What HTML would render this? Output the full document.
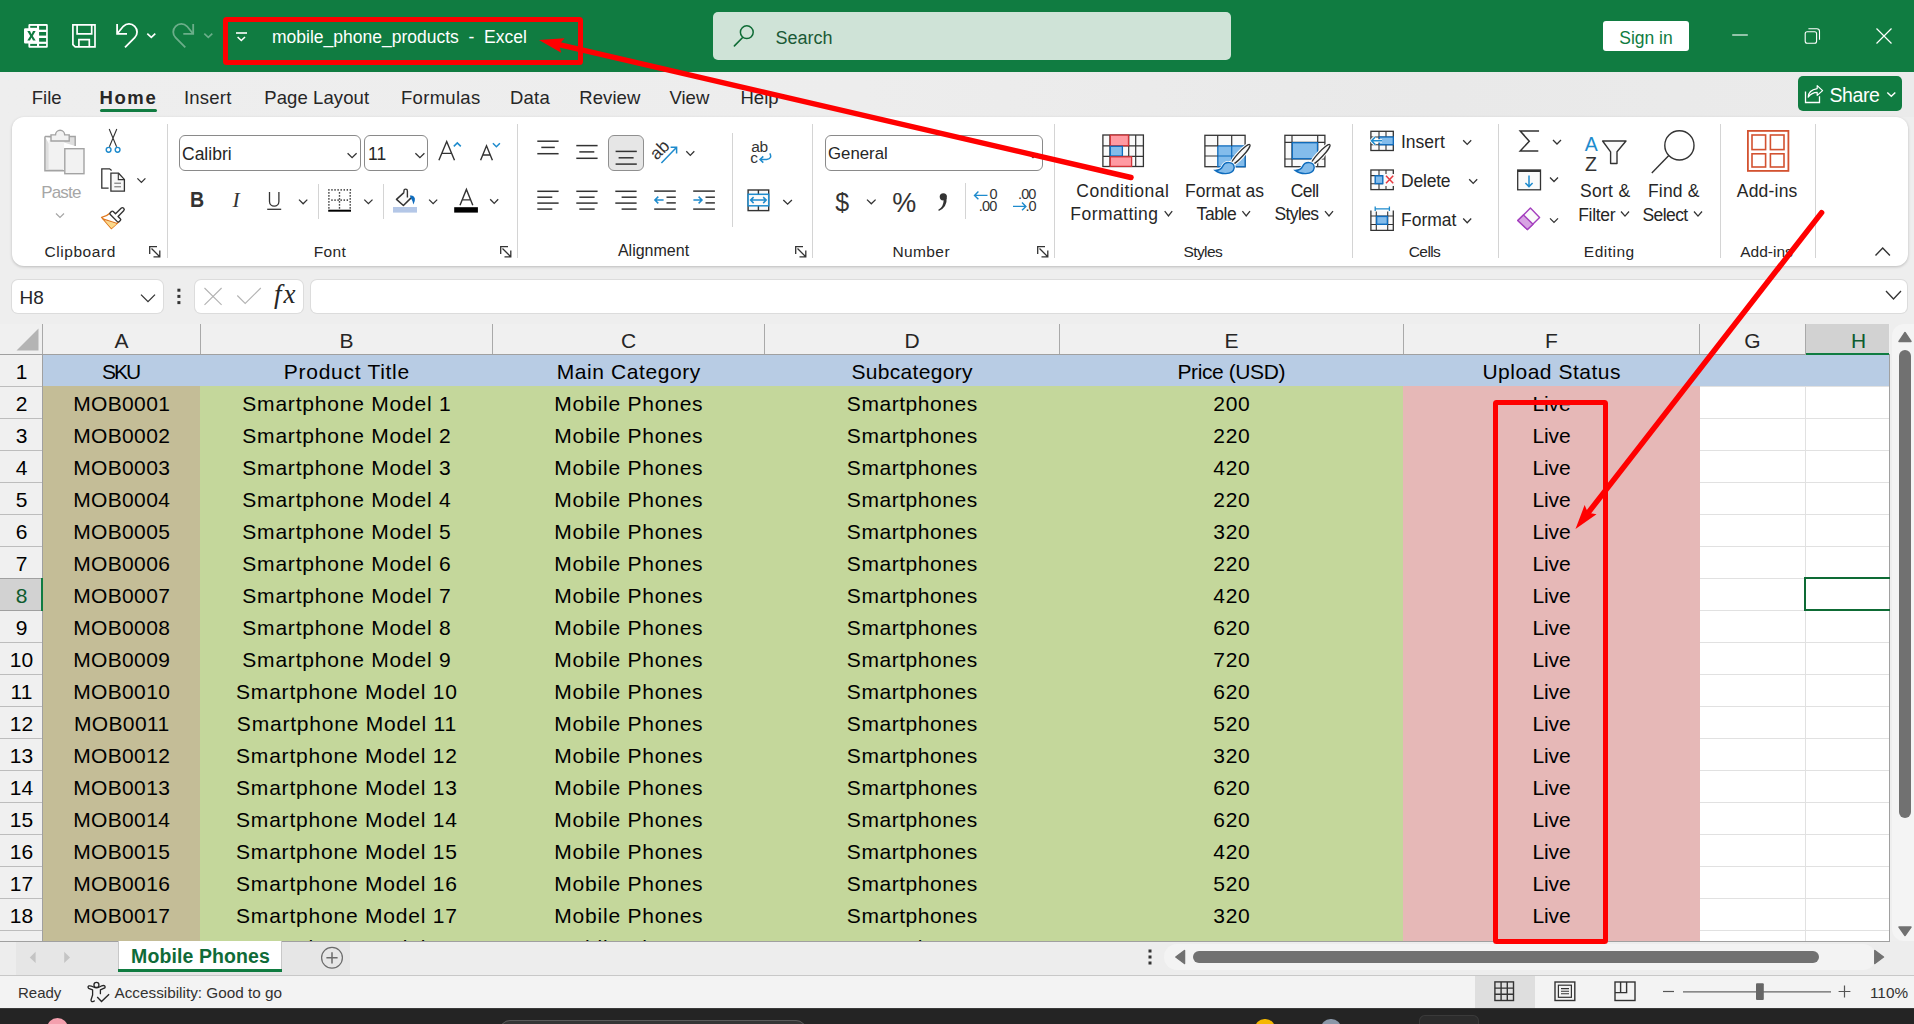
<!DOCTYPE html>
<html><head><meta charset="utf-8"><title>mobile_phone_products - Excel</title>
<style>
html,body{margin:0;padding:0;}
body{width:1914px;height:1024px;overflow:hidden;position:relative;background:#eeeeee;font-family:"Liberation Sans", sans-serif;}
.t{position:absolute;white-space:pre;line-height:normal;}
.r{position:absolute;}
svg.ov{position:absolute;left:0;top:0;}
</style></head><body>
<div class="r" style="left:0px;top:0px;width:1914px;height:72px;background:#107c41;"></div>
<div class="r" style="left:713px;top:12px;width:518px;height:48px;background:#cfe3d7;border-radius:5px;"></div>
<div class="t" style="top:27.71px;font-size:18px;color:#1a5a36;left:775.50px;">Search</div>
<div class="r" style="left:1603px;top:21px;width:86px;height:30px;background:#ffffff;border-radius:3px;"></div>
<div class="t" style="top:27.86px;font-size:17.5px;color:#107c41;left:1146.00px;width:1000px;text-align:center;">Sign in</div>
<div class="t" style="top:27.16px;font-size:17.5px;color:#ffffff;left:272.00px;">mobile_phone_products  -  Excel</div>
<div class="r" style="left:0px;top:72px;width:1914px;height:45px;background:linear-gradient(90deg,#eeeeee 0%,#ededed 45%,#e9e9e9 75%,#ebebeb 100%);"></div>
<div class="t" style="top:86.66px;font-size:18.5px;color:#262626;left:31.80px;">File</div>
<div class="t" style="top:86.66px;font-size:18.5px;color:#262626;font-weight:bold;letter-spacing:1.6px;left:99.50px;">Home</div>
<div class="t" style="top:86.66px;font-size:18.5px;color:#262626;letter-spacing:0.2px;left:184.00px;">Insert</div>
<div class="t" style="top:86.66px;font-size:18.5px;color:#262626;letter-spacing:0.1px;left:264.20px;">Page Layout</div>
<div class="t" style="top:86.66px;font-size:18.5px;color:#262626;letter-spacing:0.3px;left:401.00px;">Formulas</div>
<div class="t" style="top:86.66px;font-size:18.5px;color:#262626;letter-spacing:0.2px;left:510.00px;">Data</div>
<div class="t" style="top:86.66px;font-size:18.5px;color:#262626;letter-spacing:0.1px;left:579.20px;">Review</div>
<div class="t" style="top:86.66px;font-size:18.5px;color:#262626;left:669.50px;">View</div>
<div class="t" style="top:86.66px;font-size:18.5px;color:#262626;left:740.50px;">Help</div>
<div class="r" style="left:100px;top:109px;width:57px;height:3px;background:#107c41;border-radius:2px;"></div>
<div class="r" style="left:1798px;top:76px;width:104px;height:35px;background:#107c41;border-radius:5px;"></div>
<div class="t" style="top:84.15px;font-size:19.5px;color:#ffffff;letter-spacing:-0.4px;left:1829.50px;">Share</div>
<div class="r" style="left:12px;top:117px;width:1896px;height:149px;background:#ffffff;border-radius:12px;box-shadow:0 1px 3px rgba(0,0,0,0.22);"></div>
<div class="r" style="left:12px;top:280px;width:151px;height:33px;background:#ffffff;border-radius:6px;box-shadow:0 0 0 1px #dcdcdc;"></div>
<div class="t" style="top:286.50px;font-size:19px;color:#262626;left:19.50px;">H8</div>
<div class="r" style="left:195px;top:280px;width:108px;height:33px;background:#ffffff;border-radius:6px;box-shadow:0 0 0 1px #dcdcdc;"></div>
<div class="r" style="left:311px;top:280px;width:1596px;height:33px;background:#ffffff;border-radius:6px;box-shadow:0 0 0 1px #dcdcdc;"></div>
<div class="r" style="left:0px;top:324px;width:1890px;height:617px;background:#ffffff;"></div>
<div class="r" style="left:0px;top:324px;width:1890px;height:31px;background:#f0f0f0;"></div>
<div class="r" style="left:0px;top:355px;width:42px;height:586px;background:#f0f0f0;"></div>
<div class="r" style="left:1699px;top:386px;width:190px;height:1px;background:#e1e1e1;"></div>
<div class="r" style="left:1699px;top:418px;width:190px;height:1px;background:#e1e1e1;"></div>
<div class="r" style="left:1699px;top:450px;width:190px;height:1px;background:#e1e1e1;"></div>
<div class="r" style="left:1699px;top:482px;width:190px;height:1px;background:#e1e1e1;"></div>
<div class="r" style="left:1699px;top:514px;width:190px;height:1px;background:#e1e1e1;"></div>
<div class="r" style="left:1699px;top:546px;width:190px;height:1px;background:#e1e1e1;"></div>
<div class="r" style="left:1699px;top:578px;width:190px;height:1px;background:#e1e1e1;"></div>
<div class="r" style="left:1699px;top:610px;width:190px;height:1px;background:#e1e1e1;"></div>
<div class="r" style="left:1699px;top:642px;width:190px;height:1px;background:#e1e1e1;"></div>
<div class="r" style="left:1699px;top:674px;width:190px;height:1px;background:#e1e1e1;"></div>
<div class="r" style="left:1699px;top:706px;width:190px;height:1px;background:#e1e1e1;"></div>
<div class="r" style="left:1699px;top:738px;width:190px;height:1px;background:#e1e1e1;"></div>
<div class="r" style="left:1699px;top:770px;width:190px;height:1px;background:#e1e1e1;"></div>
<div class="r" style="left:1699px;top:802px;width:190px;height:1px;background:#e1e1e1;"></div>
<div class="r" style="left:1699px;top:834px;width:190px;height:1px;background:#e1e1e1;"></div>
<div class="r" style="left:1699px;top:866px;width:190px;height:1px;background:#e1e1e1;"></div>
<div class="r" style="left:1699px;top:898px;width:190px;height:1px;background:#e1e1e1;"></div>
<div class="r" style="left:1699px;top:930px;width:190px;height:1px;background:#e1e1e1;"></div>
<div class="r" style="left:1805px;top:355px;width:1px;height:586px;background:#e1e1e1;"></div>
<div class="r" style="left:43px;top:355px;width:1846px;height:31px;background:#b8cce4;"></div>
<div class="r" style="left:43px;top:386px;width:157px;height:555px;background:#c4bd97;"></div>
<div class="r" style="left:200px;top:386px;width:1203px;height:555px;background:#c4d79b;"></div>
<div class="r" style="left:1403px;top:386px;width:297px;height:555px;background:#e6b8b7;"></div>
<div class="r" style="left:1805px;top:324px;width:84px;height:31px;background:#d2d2d2;"></div>
<div class="r" style="left:1805px;top:353px;width:84px;height:2px;background:#107c41;"></div>
<div class="r" style="left:0px;top:578px;width:42px;height:33px;background:#d2d2d2;"></div>
<div class="r" style="left:42px;top:324px;width:1px;height:31px;background:#a9a9a9;"></div>
<div class="r" style="left:200px;top:324px;width:1px;height:31px;background:#a9a9a9;"></div>
<div class="r" style="left:492px;top:324px;width:1px;height:31px;background:#a9a9a9;"></div>
<div class="r" style="left:764px;top:324px;width:1px;height:31px;background:#a9a9a9;"></div>
<div class="r" style="left:1059px;top:324px;width:1px;height:31px;background:#a9a9a9;"></div>
<div class="r" style="left:1403px;top:324px;width:1px;height:31px;background:#a9a9a9;"></div>
<div class="r" style="left:1699px;top:324px;width:1px;height:31px;background:#a9a9a9;"></div>
<div class="r" style="left:1805px;top:324px;width:1px;height:31px;background:#a9a9a9;"></div>
<div class="r" style="left:0px;top:354px;width:1805px;height:1px;background:#a0a0a0;"></div>
<div class="r" style="left:0px;top:386px;width:42px;height:1px;background:#bdbdbd;"></div>
<div class="r" style="left:0px;top:418px;width:42px;height:1px;background:#bdbdbd;"></div>
<div class="r" style="left:0px;top:450px;width:42px;height:1px;background:#bdbdbd;"></div>
<div class="r" style="left:0px;top:482px;width:42px;height:1px;background:#bdbdbd;"></div>
<div class="r" style="left:0px;top:514px;width:42px;height:1px;background:#bdbdbd;"></div>
<div class="r" style="left:0px;top:546px;width:42px;height:1px;background:#bdbdbd;"></div>
<div class="r" style="left:0px;top:642px;width:42px;height:1px;background:#bdbdbd;"></div>
<div class="r" style="left:0px;top:674px;width:42px;height:1px;background:#bdbdbd;"></div>
<div class="r" style="left:0px;top:706px;width:42px;height:1px;background:#bdbdbd;"></div>
<div class="r" style="left:0px;top:738px;width:42px;height:1px;background:#bdbdbd;"></div>
<div class="r" style="left:0px;top:770px;width:42px;height:1px;background:#bdbdbd;"></div>
<div class="r" style="left:0px;top:802px;width:42px;height:1px;background:#bdbdbd;"></div>
<div class="r" style="left:0px;top:834px;width:42px;height:1px;background:#bdbdbd;"></div>
<div class="r" style="left:0px;top:866px;width:42px;height:1px;background:#bdbdbd;"></div>
<div class="r" style="left:0px;top:898px;width:42px;height:1px;background:#bdbdbd;"></div>
<div class="r" style="left:0px;top:930px;width:42px;height:1px;background:#bdbdbd;"></div>
<div class="r" style="left:0px;top:578px;width:42px;height:1px;background:#a0a0a0;"></div>
<div class="r" style="left:0px;top:610px;width:42px;height:1px;background:#a0a0a0;"></div>
<div class="r" style="left:42px;top:355px;width:1px;height:586px;background:#a0a0a0;"></div>
<div class="r" style="left:41px;top:578px;width:2px;height:33px;background:#107c41;"></div>
<div class="r" style="left:1889px;top:354px;width:1px;height:587px;background:#a0a0a0;"></div>
<div class="t" style="top:329.00px;font-size:21px;color:#262626;left:-378.50px;width:1000px;text-align:center;">A</div>
<div class="t" style="top:329.00px;font-size:21px;color:#262626;left:-153.50px;width:1000px;text-align:center;">B</div>
<div class="t" style="top:329.00px;font-size:21px;color:#262626;left:128.50px;width:1000px;text-align:center;">C</div>
<div class="t" style="top:329.00px;font-size:21px;color:#262626;left:412.00px;width:1000px;text-align:center;">D</div>
<div class="t" style="top:329.00px;font-size:21px;color:#262626;left:731.50px;width:1000px;text-align:center;">E</div>
<div class="t" style="top:329.00px;font-size:21px;color:#262626;left:1051.50px;width:1000px;text-align:center;">F</div>
<div class="t" style="top:329.00px;font-size:21px;color:#262626;left:1252.50px;width:1000px;text-align:center;">G</div>
<div class="t" style="top:329.00px;font-size:21px;color:#0e5c2f;left:1358.50px;width:1000px;text-align:center;">H</div>
<div class="t" style="top:359.50px;font-size:21px;color:#000000;left:-478.50px;width:1000px;text-align:center;">1</div>
<div class="t" style="top:391.50px;font-size:21px;color:#000000;left:-478.50px;width:1000px;text-align:center;">2</div>
<div class="t" style="top:423.50px;font-size:21px;color:#000000;left:-478.50px;width:1000px;text-align:center;">3</div>
<div class="t" style="top:455.50px;font-size:21px;color:#000000;left:-478.50px;width:1000px;text-align:center;">4</div>
<div class="t" style="top:487.50px;font-size:21px;color:#000000;left:-478.50px;width:1000px;text-align:center;">5</div>
<div class="t" style="top:519.50px;font-size:21px;color:#000000;left:-478.50px;width:1000px;text-align:center;">6</div>
<div class="t" style="top:551.50px;font-size:21px;color:#000000;left:-478.50px;width:1000px;text-align:center;">7</div>
<div class="t" style="top:583.50px;font-size:21px;color:#0e5c2f;left:-478.50px;width:1000px;text-align:center;">8</div>
<div class="t" style="top:615.50px;font-size:21px;color:#000000;left:-478.50px;width:1000px;text-align:center;">9</div>
<div class="t" style="top:647.50px;font-size:21px;color:#000000;left:-478.50px;width:1000px;text-align:center;">10</div>
<div class="t" style="top:679.50px;font-size:21px;color:#000000;left:-478.50px;width:1000px;text-align:center;">11</div>
<div class="t" style="top:711.50px;font-size:21px;color:#000000;left:-478.50px;width:1000px;text-align:center;">12</div>
<div class="t" style="top:743.50px;font-size:21px;color:#000000;left:-478.50px;width:1000px;text-align:center;">13</div>
<div class="t" style="top:775.50px;font-size:21px;color:#000000;left:-478.50px;width:1000px;text-align:center;">14</div>
<div class="t" style="top:807.50px;font-size:21px;color:#000000;left:-478.50px;width:1000px;text-align:center;">15</div>
<div class="t" style="top:839.50px;font-size:21px;color:#000000;left:-478.50px;width:1000px;text-align:center;">16</div>
<div class="t" style="top:871.50px;font-size:21px;color:#000000;left:-478.50px;width:1000px;text-align:center;">17</div>
<div class="t" style="top:903.50px;font-size:21px;color:#000000;left:-478.50px;width:1000px;text-align:center;">18</div>
<div class="t" style="top:935.50px;font-size:21px;color:#000000;left:-478.50px;width:1000px;text-align:center;">19</div>
<div class="t" style="top:360.19px;font-size:21px;color:#000000;letter-spacing:-2.0px;left:-379.50px;width:1000px;text-align:center;">SKU</div>
<div class="t" style="top:360.19px;font-size:21px;color:#000000;letter-spacing:0.72px;left:-153.14px;width:1000px;text-align:center;">Product Title</div>
<div class="t" style="top:360.19px;font-size:21px;color:#000000;letter-spacing:0.58px;left:128.79px;width:1000px;text-align:center;">Main Category</div>
<div class="t" style="top:360.19px;font-size:21px;color:#000000;letter-spacing:0.3px;left:412.15px;width:1000px;text-align:center;">Subcategory</div>
<div class="t" style="top:360.19px;font-size:21px;color:#000000;letter-spacing:-0.4px;left:731.30px;width:1000px;text-align:center;">Price (USD)</div>
<div class="t" style="top:360.19px;font-size:21px;color:#000000;letter-spacing:0.52px;left:1051.76px;width:1000px;text-align:center;">Upload Status</div>
<div class="t" style="top:392.19px;font-size:21px;color:#000000;letter-spacing:0.37px;left:-378.31px;width:1000px;text-align:center;">MOB0001</div>
<div class="t" style="top:392.19px;font-size:21px;color:#000000;letter-spacing:0.79px;left:-153.11px;width:1000px;text-align:center;">Smartphone Model 1</div>
<div class="t" style="top:392.19px;font-size:21px;color:#000000;letter-spacing:0.78px;left:128.89px;width:1000px;text-align:center;">Mobile Phones</div>
<div class="t" style="top:392.19px;font-size:21px;color:#000000;letter-spacing:0.54px;left:412.27px;width:1000px;text-align:center;">Smartphones</div>
<div class="t" style="top:392.19px;font-size:21px;color:#000000;letter-spacing:0.65px;left:731.83px;width:1000px;text-align:center;">200</div>
<div class="t" style="top:392.19px;font-size:21px;color:#000000;letter-spacing:-0.1px;left:1051.45px;width:1000px;text-align:center;">Live</div>
<div class="t" style="top:424.19px;font-size:21px;color:#000000;letter-spacing:0.37px;left:-378.31px;width:1000px;text-align:center;">MOB0002</div>
<div class="t" style="top:424.19px;font-size:21px;color:#000000;letter-spacing:0.79px;left:-153.11px;width:1000px;text-align:center;">Smartphone Model 2</div>
<div class="t" style="top:424.19px;font-size:21px;color:#000000;letter-spacing:0.78px;left:128.89px;width:1000px;text-align:center;">Mobile Phones</div>
<div class="t" style="top:424.19px;font-size:21px;color:#000000;letter-spacing:0.54px;left:412.27px;width:1000px;text-align:center;">Smartphones</div>
<div class="t" style="top:424.19px;font-size:21px;color:#000000;letter-spacing:0.65px;left:731.83px;width:1000px;text-align:center;">220</div>
<div class="t" style="top:424.19px;font-size:21px;color:#000000;letter-spacing:-0.1px;left:1051.45px;width:1000px;text-align:center;">Live</div>
<div class="t" style="top:456.19px;font-size:21px;color:#000000;letter-spacing:0.37px;left:-378.31px;width:1000px;text-align:center;">MOB0003</div>
<div class="t" style="top:456.19px;font-size:21px;color:#000000;letter-spacing:0.79px;left:-153.11px;width:1000px;text-align:center;">Smartphone Model 3</div>
<div class="t" style="top:456.19px;font-size:21px;color:#000000;letter-spacing:0.78px;left:128.89px;width:1000px;text-align:center;">Mobile Phones</div>
<div class="t" style="top:456.19px;font-size:21px;color:#000000;letter-spacing:0.54px;left:412.27px;width:1000px;text-align:center;">Smartphones</div>
<div class="t" style="top:456.19px;font-size:21px;color:#000000;letter-spacing:0.65px;left:731.83px;width:1000px;text-align:center;">420</div>
<div class="t" style="top:456.19px;font-size:21px;color:#000000;letter-spacing:-0.1px;left:1051.45px;width:1000px;text-align:center;">Live</div>
<div class="t" style="top:488.19px;font-size:21px;color:#000000;letter-spacing:0.37px;left:-378.31px;width:1000px;text-align:center;">MOB0004</div>
<div class="t" style="top:488.19px;font-size:21px;color:#000000;letter-spacing:0.79px;left:-153.11px;width:1000px;text-align:center;">Smartphone Model 4</div>
<div class="t" style="top:488.19px;font-size:21px;color:#000000;letter-spacing:0.78px;left:128.89px;width:1000px;text-align:center;">Mobile Phones</div>
<div class="t" style="top:488.19px;font-size:21px;color:#000000;letter-spacing:0.54px;left:412.27px;width:1000px;text-align:center;">Smartphones</div>
<div class="t" style="top:488.19px;font-size:21px;color:#000000;letter-spacing:0.65px;left:731.83px;width:1000px;text-align:center;">220</div>
<div class="t" style="top:488.19px;font-size:21px;color:#000000;letter-spacing:-0.1px;left:1051.45px;width:1000px;text-align:center;">Live</div>
<div class="t" style="top:520.20px;font-size:21px;color:#000000;letter-spacing:0.37px;left:-378.31px;width:1000px;text-align:center;">MOB0005</div>
<div class="t" style="top:520.20px;font-size:21px;color:#000000;letter-spacing:0.79px;left:-153.11px;width:1000px;text-align:center;">Smartphone Model 5</div>
<div class="t" style="top:520.20px;font-size:21px;color:#000000;letter-spacing:0.78px;left:128.89px;width:1000px;text-align:center;">Mobile Phones</div>
<div class="t" style="top:520.20px;font-size:21px;color:#000000;letter-spacing:0.54px;left:412.27px;width:1000px;text-align:center;">Smartphones</div>
<div class="t" style="top:520.20px;font-size:21px;color:#000000;letter-spacing:0.65px;left:731.83px;width:1000px;text-align:center;">320</div>
<div class="t" style="top:520.20px;font-size:21px;color:#000000;letter-spacing:-0.1px;left:1051.45px;width:1000px;text-align:center;">Live</div>
<div class="t" style="top:552.20px;font-size:21px;color:#000000;letter-spacing:0.37px;left:-378.31px;width:1000px;text-align:center;">MOB0006</div>
<div class="t" style="top:552.20px;font-size:21px;color:#000000;letter-spacing:0.79px;left:-153.11px;width:1000px;text-align:center;">Smartphone Model 6</div>
<div class="t" style="top:552.20px;font-size:21px;color:#000000;letter-spacing:0.78px;left:128.89px;width:1000px;text-align:center;">Mobile Phones</div>
<div class="t" style="top:552.20px;font-size:21px;color:#000000;letter-spacing:0.54px;left:412.27px;width:1000px;text-align:center;">Smartphones</div>
<div class="t" style="top:552.20px;font-size:21px;color:#000000;letter-spacing:0.65px;left:731.83px;width:1000px;text-align:center;">220</div>
<div class="t" style="top:552.20px;font-size:21px;color:#000000;letter-spacing:-0.1px;left:1051.45px;width:1000px;text-align:center;">Live</div>
<div class="t" style="top:584.20px;font-size:21px;color:#000000;letter-spacing:0.37px;left:-378.31px;width:1000px;text-align:center;">MOB0007</div>
<div class="t" style="top:584.20px;font-size:21px;color:#000000;letter-spacing:0.79px;left:-153.11px;width:1000px;text-align:center;">Smartphone Model 7</div>
<div class="t" style="top:584.20px;font-size:21px;color:#000000;letter-spacing:0.78px;left:128.89px;width:1000px;text-align:center;">Mobile Phones</div>
<div class="t" style="top:584.20px;font-size:21px;color:#000000;letter-spacing:0.54px;left:412.27px;width:1000px;text-align:center;">Smartphones</div>
<div class="t" style="top:584.20px;font-size:21px;color:#000000;letter-spacing:0.65px;left:731.83px;width:1000px;text-align:center;">420</div>
<div class="t" style="top:584.20px;font-size:21px;color:#000000;letter-spacing:-0.1px;left:1051.45px;width:1000px;text-align:center;">Live</div>
<div class="t" style="top:616.20px;font-size:21px;color:#000000;letter-spacing:0.37px;left:-378.31px;width:1000px;text-align:center;">MOB0008</div>
<div class="t" style="top:616.20px;font-size:21px;color:#000000;letter-spacing:0.79px;left:-153.11px;width:1000px;text-align:center;">Smartphone Model 8</div>
<div class="t" style="top:616.20px;font-size:21px;color:#000000;letter-spacing:0.78px;left:128.89px;width:1000px;text-align:center;">Mobile Phones</div>
<div class="t" style="top:616.20px;font-size:21px;color:#000000;letter-spacing:0.54px;left:412.27px;width:1000px;text-align:center;">Smartphones</div>
<div class="t" style="top:616.20px;font-size:21px;color:#000000;letter-spacing:0.65px;left:731.83px;width:1000px;text-align:center;">620</div>
<div class="t" style="top:616.20px;font-size:21px;color:#000000;letter-spacing:-0.1px;left:1051.45px;width:1000px;text-align:center;">Live</div>
<div class="t" style="top:648.20px;font-size:21px;color:#000000;letter-spacing:0.37px;left:-378.31px;width:1000px;text-align:center;">MOB0009</div>
<div class="t" style="top:648.20px;font-size:21px;color:#000000;letter-spacing:0.79px;left:-153.11px;width:1000px;text-align:center;">Smartphone Model 9</div>
<div class="t" style="top:648.20px;font-size:21px;color:#000000;letter-spacing:0.78px;left:128.89px;width:1000px;text-align:center;">Mobile Phones</div>
<div class="t" style="top:648.20px;font-size:21px;color:#000000;letter-spacing:0.54px;left:412.27px;width:1000px;text-align:center;">Smartphones</div>
<div class="t" style="top:648.20px;font-size:21px;color:#000000;letter-spacing:0.65px;left:731.83px;width:1000px;text-align:center;">720</div>
<div class="t" style="top:648.20px;font-size:21px;color:#000000;letter-spacing:-0.1px;left:1051.45px;width:1000px;text-align:center;">Live</div>
<div class="t" style="top:680.20px;font-size:21px;color:#000000;letter-spacing:0.37px;left:-378.31px;width:1000px;text-align:center;">MOB0010</div>
<div class="t" style="top:680.20px;font-size:21px;color:#000000;letter-spacing:0.79px;left:-153.11px;width:1000px;text-align:center;">Smartphone Model 10</div>
<div class="t" style="top:680.20px;font-size:21px;color:#000000;letter-spacing:0.78px;left:128.89px;width:1000px;text-align:center;">Mobile Phones</div>
<div class="t" style="top:680.20px;font-size:21px;color:#000000;letter-spacing:0.54px;left:412.27px;width:1000px;text-align:center;">Smartphones</div>
<div class="t" style="top:680.20px;font-size:21px;color:#000000;letter-spacing:0.65px;left:731.83px;width:1000px;text-align:center;">620</div>
<div class="t" style="top:680.20px;font-size:21px;color:#000000;letter-spacing:-0.1px;left:1051.45px;width:1000px;text-align:center;">Live</div>
<div class="t" style="top:712.20px;font-size:21px;color:#000000;letter-spacing:0.37px;left:-378.31px;width:1000px;text-align:center;">MOB0011</div>
<div class="t" style="top:712.20px;font-size:21px;color:#000000;letter-spacing:0.79px;left:-153.11px;width:1000px;text-align:center;">Smartphone Model 11</div>
<div class="t" style="top:712.20px;font-size:21px;color:#000000;letter-spacing:0.78px;left:128.89px;width:1000px;text-align:center;">Mobile Phones</div>
<div class="t" style="top:712.20px;font-size:21px;color:#000000;letter-spacing:0.54px;left:412.27px;width:1000px;text-align:center;">Smartphones</div>
<div class="t" style="top:712.20px;font-size:21px;color:#000000;letter-spacing:0.65px;left:731.83px;width:1000px;text-align:center;">520</div>
<div class="t" style="top:712.20px;font-size:21px;color:#000000;letter-spacing:-0.1px;left:1051.45px;width:1000px;text-align:center;">Live</div>
<div class="t" style="top:744.20px;font-size:21px;color:#000000;letter-spacing:0.37px;left:-378.31px;width:1000px;text-align:center;">MOB0012</div>
<div class="t" style="top:744.20px;font-size:21px;color:#000000;letter-spacing:0.79px;left:-153.11px;width:1000px;text-align:center;">Smartphone Model 12</div>
<div class="t" style="top:744.20px;font-size:21px;color:#000000;letter-spacing:0.78px;left:128.89px;width:1000px;text-align:center;">Mobile Phones</div>
<div class="t" style="top:744.20px;font-size:21px;color:#000000;letter-spacing:0.54px;left:412.27px;width:1000px;text-align:center;">Smartphones</div>
<div class="t" style="top:744.20px;font-size:21px;color:#000000;letter-spacing:0.65px;left:731.83px;width:1000px;text-align:center;">320</div>
<div class="t" style="top:744.20px;font-size:21px;color:#000000;letter-spacing:-0.1px;left:1051.45px;width:1000px;text-align:center;">Live</div>
<div class="t" style="top:776.20px;font-size:21px;color:#000000;letter-spacing:0.37px;left:-378.31px;width:1000px;text-align:center;">MOB0013</div>
<div class="t" style="top:776.20px;font-size:21px;color:#000000;letter-spacing:0.79px;left:-153.11px;width:1000px;text-align:center;">Smartphone Model 13</div>
<div class="t" style="top:776.20px;font-size:21px;color:#000000;letter-spacing:0.78px;left:128.89px;width:1000px;text-align:center;">Mobile Phones</div>
<div class="t" style="top:776.20px;font-size:21px;color:#000000;letter-spacing:0.54px;left:412.27px;width:1000px;text-align:center;">Smartphones</div>
<div class="t" style="top:776.20px;font-size:21px;color:#000000;letter-spacing:0.65px;left:731.83px;width:1000px;text-align:center;">620</div>
<div class="t" style="top:776.20px;font-size:21px;color:#000000;letter-spacing:-0.1px;left:1051.45px;width:1000px;text-align:center;">Live</div>
<div class="t" style="top:808.20px;font-size:21px;color:#000000;letter-spacing:0.37px;left:-378.31px;width:1000px;text-align:center;">MOB0014</div>
<div class="t" style="top:808.20px;font-size:21px;color:#000000;letter-spacing:0.79px;left:-153.11px;width:1000px;text-align:center;">Smartphone Model 14</div>
<div class="t" style="top:808.20px;font-size:21px;color:#000000;letter-spacing:0.78px;left:128.89px;width:1000px;text-align:center;">Mobile Phones</div>
<div class="t" style="top:808.20px;font-size:21px;color:#000000;letter-spacing:0.54px;left:412.27px;width:1000px;text-align:center;">Smartphones</div>
<div class="t" style="top:808.20px;font-size:21px;color:#000000;letter-spacing:0.65px;left:731.83px;width:1000px;text-align:center;">620</div>
<div class="t" style="top:808.20px;font-size:21px;color:#000000;letter-spacing:-0.1px;left:1051.45px;width:1000px;text-align:center;">Live</div>
<div class="t" style="top:840.20px;font-size:21px;color:#000000;letter-spacing:0.37px;left:-378.31px;width:1000px;text-align:center;">MOB0015</div>
<div class="t" style="top:840.20px;font-size:21px;color:#000000;letter-spacing:0.79px;left:-153.11px;width:1000px;text-align:center;">Smartphone Model 15</div>
<div class="t" style="top:840.20px;font-size:21px;color:#000000;letter-spacing:0.78px;left:128.89px;width:1000px;text-align:center;">Mobile Phones</div>
<div class="t" style="top:840.20px;font-size:21px;color:#000000;letter-spacing:0.54px;left:412.27px;width:1000px;text-align:center;">Smartphones</div>
<div class="t" style="top:840.20px;font-size:21px;color:#000000;letter-spacing:0.65px;left:731.83px;width:1000px;text-align:center;">420</div>
<div class="t" style="top:840.20px;font-size:21px;color:#000000;letter-spacing:-0.1px;left:1051.45px;width:1000px;text-align:center;">Live</div>
<div class="t" style="top:872.20px;font-size:21px;color:#000000;letter-spacing:0.37px;left:-378.31px;width:1000px;text-align:center;">MOB0016</div>
<div class="t" style="top:872.20px;font-size:21px;color:#000000;letter-spacing:0.79px;left:-153.11px;width:1000px;text-align:center;">Smartphone Model 16</div>
<div class="t" style="top:872.20px;font-size:21px;color:#000000;letter-spacing:0.78px;left:128.89px;width:1000px;text-align:center;">Mobile Phones</div>
<div class="t" style="top:872.20px;font-size:21px;color:#000000;letter-spacing:0.54px;left:412.27px;width:1000px;text-align:center;">Smartphones</div>
<div class="t" style="top:872.20px;font-size:21px;color:#000000;letter-spacing:0.65px;left:731.83px;width:1000px;text-align:center;">520</div>
<div class="t" style="top:872.20px;font-size:21px;color:#000000;letter-spacing:-0.1px;left:1051.45px;width:1000px;text-align:center;">Live</div>
<div class="t" style="top:904.20px;font-size:21px;color:#000000;letter-spacing:0.37px;left:-378.31px;width:1000px;text-align:center;">MOB0017</div>
<div class="t" style="top:904.20px;font-size:21px;color:#000000;letter-spacing:0.79px;left:-153.11px;width:1000px;text-align:center;">Smartphone Model 17</div>
<div class="t" style="top:904.20px;font-size:21px;color:#000000;letter-spacing:0.78px;left:128.89px;width:1000px;text-align:center;">Mobile Phones</div>
<div class="t" style="top:904.20px;font-size:21px;color:#000000;letter-spacing:0.54px;left:412.27px;width:1000px;text-align:center;">Smartphones</div>
<div class="t" style="top:904.20px;font-size:21px;color:#000000;letter-spacing:0.65px;left:731.83px;width:1000px;text-align:center;">320</div>
<div class="t" style="top:904.20px;font-size:21px;color:#000000;letter-spacing:-0.1px;left:1051.45px;width:1000px;text-align:center;">Live</div>
<div class="t" style="top:936.20px;font-size:21px;color:#000000;letter-spacing:0.37px;left:-378.31px;width:1000px;text-align:center;">MOB0018</div>
<div class="t" style="top:936.20px;font-size:21px;color:#000000;letter-spacing:0.79px;left:-153.11px;width:1000px;text-align:center;">Smartphone Model 18</div>
<div class="t" style="top:936.20px;font-size:21px;color:#000000;letter-spacing:0.78px;left:128.89px;width:1000px;text-align:center;">Mobile Phones</div>
<div class="t" style="top:936.20px;font-size:21px;color:#000000;letter-spacing:0.54px;left:412.27px;width:1000px;text-align:center;">Smartphones</div>
<div class="t" style="top:936.20px;font-size:21px;color:#000000;letter-spacing:0.65px;left:731.83px;width:1000px;text-align:center;">320</div>
<div class="t" style="top:936.20px;font-size:21px;color:#000000;letter-spacing:-0.1px;left:1051.45px;width:1000px;text-align:center;">Live</div>
<div class="r" style="left:1804px;top:577px;width:86px;height:34px;background:transparent;box-sizing:border-box;border:2px solid #0e6b35;border-right:none;"></div>
<div class="r" style="left:1890px;top:324px;width:24px;height:617px;background:#eeeeee;"></div>
<div class="r" style="left:1892px;top:324px;width:24px;height:617px;background:#f4f4f4;border-radius:12px 0 0 12px;"></div>
<div class="r" style="left:1899px;top:350px;width:12px;height:468px;background:#717171;border-radius:6px;"></div>
<div class="r" style="left:0px;top:941px;width:1914px;height:35px;background:#ededed;"></div>
<div class="r" style="left:0px;top:941px;width:1890px;height:1px;background:#a0a0a0;"></div>
<div class="r" style="left:16px;top:942px;width:334px;height:33px;background:#e6e6e6;"></div>
<div class="r" style="left:118px;top:941px;width:164px;height:31px;background:#ffffff;box-sizing:border-box;border-left:1px solid #c8c8c8;border-right:1px solid #c8c8c8;"></div>
<div class="r" style="left:118px;top:969px;width:164px;height:2.5px;background:#107c41;"></div>
<div class="t" style="top:944.95px;font-size:19.5px;color:#0f6b38;font-weight:bold;letter-spacing:0.1px;left:-299.50px;width:1000px;text-align:center;">Mobile Phones</div>
<div class="r" style="left:1164px;top:944px;width:712px;height:26px;background:#f3f3f3;border-radius:13px;"></div>
<div class="r" style="left:1193px;top:951px;width:626px;height:12px;background:#717171;border-radius:6px;"></div>
<div class="r" style="left:0px;top:975px;width:1914px;height:1px;background:#c8c8c8;"></div>
<div class="r" style="left:0px;top:976px;width:1914px;height:32px;background:#f3f3f3;"></div>
<div class="t" style="top:983.92px;font-size:15px;color:#323130;left:18.00px;">Ready</div>
<div class="t" style="top:983.65px;font-size:15.3px;color:#323130;left:114.50px;">Accessibility: Good to go</div>
<div class="r" style="left:1475px;top:976px;width:60px;height:32px;background:#dedede;"></div>
<div class="t" style="top:983.95px;font-size:15.3px;color:#323130;left:908.00px;width:1000px;text-align:right;">110%</div>
<div class="r" style="left:0px;top:1008px;width:1914px;height:16px;background:#242424;"></div>
<div class="r" style="left:0px;top:1008px;width:1914px;height:1px;background:#3a3a3a;"></div>
<div class="r" style="left:46.5px;top:1017.5px;width:21px;height:21px;background:#f4a0ae;border-radius:50%;"></div>
<div class="r" style="left:500px;top:1020px;width:306px;height:20px;background:#353535;border-radius:10px;box-shadow:inset 0 1px 0 #5a5a5a;"></div>
<div class="r" style="left:1255px;top:1018.7px;width:19.5px;height:19.5px;background:#f5b800;border-radius:50%;"></div>
<div class="r" style="left:1321px;top:1018.7px;width:19.5px;height:19.5px;background:#8a97a8;border-radius:50%;"></div>
<div class="r" style="left:1419px;top:1014.7px;width:59.5px;height:20px;background:#2c2c2c;border-radius:6px;box-shadow:inset 0 0 0 1px #3a3a3a;"></div>
<div class="t" style="top:242.77px;font-size:15.5px;color:#262626;letter-spacing:0.55px;left:-419.80px;width:1000px;text-align:center;">Clipboard</div>
<div class="t" style="top:242.77px;font-size:15.5px;color:#262626;letter-spacing:0.4px;left:-170.00px;width:1000px;text-align:center;">Font</div>
<div class="t" style="top:242.32px;font-size:16px;color:#262626;left:153.50px;width:1000px;text-align:center;">Alignment</div>
<div class="t" style="top:242.77px;font-size:15.5px;color:#262626;letter-spacing:0.4px;left:421.20px;width:1000px;text-align:center;">Number</div>
<div class="t" style="top:242.77px;font-size:15.5px;color:#262626;letter-spacing:-0.6px;left:702.80px;width:1000px;text-align:center;">Styles</div>
<div class="t" style="top:242.77px;font-size:15.5px;color:#262626;letter-spacing:-0.6px;left:924.50px;width:1000px;text-align:center;">Cells</div>
<div class="t" style="top:242.77px;font-size:15.5px;color:#262626;letter-spacing:0.5px;left:1109.30px;width:1000px;text-align:center;">Editing</div>
<div class="t" style="top:242.77px;font-size:15.5px;color:#262626;left:1266.50px;width:1000px;text-align:center;">Add-ins</div>
<div class="r" style="left:166.5px;top:124px;width:1px;height:134px;background:#d4d4d4;"></div>
<div class="r" style="left:517px;top:124px;width:1px;height:134px;background:#d4d4d4;"></div>
<div class="r" style="left:812px;top:124px;width:1px;height:134px;background:#d4d4d4;"></div>
<div class="r" style="left:1054px;top:124px;width:1px;height:134px;background:#d4d4d4;"></div>
<div class="r" style="left:1351.5px;top:124px;width:1px;height:134px;background:#d4d4d4;"></div>
<div class="r" style="left:1498px;top:124px;width:1px;height:134px;background:#d4d4d4;"></div>
<div class="r" style="left:1720px;top:124px;width:1px;height:134px;background:#d4d4d4;"></div>
<div class="r" style="left:1814.5px;top:124px;width:1px;height:134px;background:#d4d4d4;"></div>
<div class="t" style="top:183.31px;font-size:17px;color:#a6a6a6;letter-spacing:-0.8px;left:-439.10px;width:1000px;text-align:center;">Paste</div>
<div class="r" style="left:179px;top:135px;width:182px;height:36px;background:#fff;box-sizing:border-box;border:1px solid #8a8a8a;border-radius:6px;"></div>
<div class="r" style="left:364px;top:135px;width:64px;height:36px;background:#fff;box-sizing:border-box;border:1px solid #8a8a8a;border-radius:6px;"></div>
<div class="t" style="top:144.16px;font-size:17.5px;color:#262626;left:182.00px;">Calibri</div>
<div class="t" style="top:144.16px;font-size:17.5px;color:#262626;left:368.00px;">11</div>
<div class="t" style="top:186.84px;font-size:22.5px;color:#333333;font-weight:bold;left:-302.60px;width:1000px;text-align:center;transform:scaleX(0.87);">B</div>
<div class="t" style="top:187.74px;font-size:21.5px;color:#333333;left:-264.00px;width:1000px;text-align:center;font-family:'Liberation Serif',serif;font-style:italic;">I</div>
<div class="r" style="left:318px;top:183.5px;width:1px;height:35.5px;background:#d4d4d4;"></div>
<div class="r" style="left:383px;top:183.5px;width:1px;height:35.5px;background:#d4d4d4;"></div>
<div class="r" style="left:608px;top:135px;width:36px;height:36px;background:#e6e6e6;box-sizing:border-box;border:1px solid #8f8f8f;border-radius:6px;"></div>
<div class="r" style="left:731.5px;top:133px;width:1px;height:94px;background:#d4d4d4;"></div>
<div class="t" style="top:138.37px;font-size:15.5px;color:#333333;letter-spacing:-0.3px;left:259.50px;width:1000px;text-align:center;">ab</div>
<div class="t" style="top:149.17px;font-size:15.5px;color:#333333;left:254.00px;width:1000px;text-align:center;">c</div>
<div class="r" style="left:825px;top:135px;width:218px;height:36px;background:#fff;box-sizing:border-box;border:1px solid #8a8a8a;border-radius:6px;"></div>
<div class="t" style="top:144.30px;font-size:16.8px;color:#262626;left:828.00px;">General</div>
<div class="t" style="top:188.38px;font-size:25px;color:#333333;left:342.30px;width:1000px;text-align:center;">$</div>
<div class="t" style="top:187.87px;font-size:27px;color:#333333;letter-spacing:-0.5px;left:404.00px;width:1000px;text-align:center;">%</div>
<div class="r" style="left:964.5px;top:183px;width:1px;height:36px;background:#d4d4d4;"></div>
<div class="t" style="top:186.08px;font-size:14.5px;color:#333333;left:493.60px;width:1000px;text-align:center;">0</div>
<div class="t" style="top:198.48px;font-size:14.5px;color:#333333;letter-spacing:-0.9px;left:487.60px;width:1000px;text-align:center;">.00</div>
<div class="t" style="top:186.08px;font-size:14.5px;color:#333333;letter-spacing:-0.9px;left:526.80px;width:1000px;text-align:center;">.00</div>
<div class="t" style="top:198.48px;font-size:14.5px;color:#333333;letter-spacing:-0.9px;left:530.60px;width:1000px;text-align:center;">.0</div>
<div class="t" style="top:180.96px;font-size:17.5px;color:#262626;letter-spacing:0.5px;left:622.80px;width:1000px;text-align:center;">Conditional</div>
<div class="t" style="top:204.46px;font-size:17.5px;color:#262626;letter-spacing:0.45px;left:614.40px;width:1000px;text-align:center;">Formatting</div>
<div class="t" style="top:180.96px;font-size:17.5px;color:#262626;left:724.50px;width:1000px;text-align:center;">Format as</div>
<div class="t" style="top:204.46px;font-size:17.5px;color:#262626;letter-spacing:-0.4px;left:716.50px;width:1000px;text-align:center;">Table</div>
<div class="t" style="top:180.96px;font-size:17.5px;color:#262626;letter-spacing:-0.6px;left:804.60px;width:1000px;text-align:center;">Cell</div>
<div class="t" style="top:204.46px;font-size:17.5px;color:#262626;letter-spacing:-0.6px;left:796.50px;width:1000px;text-align:center;">Styles</div>
<div class="t" style="top:131.96px;font-size:17.5px;color:#262626;left:1401.00px;">Insert</div>
<div class="t" style="top:170.86px;font-size:17.5px;color:#262626;letter-spacing:-0.2px;left:1401.00px;">Delete</div>
<div class="t" style="top:209.66px;font-size:17.5px;color:#262626;left:1401.00px;">Format</div>
<div class="t" style="top:132.55px;font-size:19.5px;color:#1e8bcd;left:1091.30px;width:1000px;text-align:center;">A</div>
<div class="t" style="top:152.65px;font-size:19.5px;color:#333333;left:1091.00px;width:1000px;text-align:center;">Z</div>
<div class="t" style="top:180.56px;font-size:17.5px;color:#262626;letter-spacing:0.3px;left:1105.20px;width:1000px;text-align:center;">Sort &amp;</div>
<div class="t" style="top:204.96px;font-size:17.5px;color:#262626;letter-spacing:-0.3px;left:1578.20px;">Filter</div>
<div class="t" style="top:180.56px;font-size:17.5px;color:#262626;letter-spacing:0.2px;left:1173.80px;width:1000px;text-align:center;">Find &amp;</div>
<div class="t" style="top:204.96px;font-size:17.5px;color:#262626;letter-spacing:-0.6px;left:1642.50px;">Select</div>
<div class="t" style="top:180.56px;font-size:17.5px;color:#262626;letter-spacing:0.2px;left:1267.20px;width:1000px;text-align:center;">Add-ins</div>
<div class="t" style="top:279.17px;font-size:27px;color:#262626;letter-spacing:2.0px;left:-214.20px;width:1000px;text-align:center;font-family:'Liberation Serif',serif;font-style:italic;">fx</div>
<svg class="ov" width="1914" height="1024" viewBox="0 0 1914 1024">
<path d="M16.5 350.5 L38.5 328.5 L38.5 350.5 Z" fill="#b4b4b4"/>
<path d="M28.6 24 H46.6 Q47.8 24 47.8 25.2 V46.6 Q47.8 47.8 46.6 47.8 H29.6 Q28.4 47.8 28.4 46.6 V43.4 H25.2 Q24 43.4 24 42.2 V29.6 Q24 28.3 25.2 28.3 H28.4 V25.2 Q28.4 24 29.6 24 Z" fill="#fff"/>
<rect x="39.1" y="25.9" width="7" height="3.8" fill="#107c41"/>
<rect x="39.1" y="32" width="7" height="3.6" fill="#107c41"/>
<rect x="39.1" y="38" width="7" height="3.7" fill="#107c41"/>
<rect x="39.1" y="43.9" width="7" height="2" fill="#107c41"/>
<rect x="30.2" y="25.9" width="6.8" height="1.9" fill="#107c41"/>
<rect x="30.2" y="43.9" width="6.8" height="2" fill="#107c41"/>
<path d="M27.3 31.1 H30 L31.5 34.2 L33 31.1 H35.6 L32.8 35.9 L35.7 40.6 H33 L31.5 37.5 L30 40.6 H27.3 L30.2 35.9 Z" fill="#107c41"/>
<path d="M72.9 24.9 H95 V46.9 H75.2 L72.9 44.6 Z" fill="none" stroke="#fff" stroke-width="1.7"/>
<path d="M77.1 24.9 V33.9 H91.7 V24.9" fill="none" stroke="#fff" stroke-width="1.7"/>
<path d="M78.9 46.9 V39.6 H89.3 V46.9" fill="none" stroke="#fff" stroke-width="1.7"/>
<g opacity="1.0" fill="none" stroke="#fff" stroke-width="1.8"><path d="M117.1 24 V33.8 H127"/><path d="M117.6 33.2 L123.3 26.3 A8 8 0 0 1 134.7 37.7 L125 47.4"/></g>
<path d="M147.3 33.6 L151.3 37.4 L155.3 33.6" fill="none" stroke="#fff" stroke-width="1.6"/>
<g transform="translate(310.3,0) scale(-1,1)" opacity="0.38" fill="none" stroke="#fff" stroke-width="1.8"><path d="M117.1 24 V33.8 H127"/><path d="M117.6 33.2 L123.3 26.3 A8 8 0 0 1 134.7 37.7 L125 47.4"/></g>
<path d="M204.3 33.6 L208.3 37.4 L212.3 33.6" fill="none" stroke="#fff" stroke-width="1.6" opacity="0.38"/>
<path d="M236 33 H247" stroke="#fff" stroke-width="1.6"/><path d="M237.6 37 L241.3 40.5 L245 37" fill="none" stroke="#fff" stroke-width="1.6"/>
<circle cx="746.8" cy="32.2" r="6.4" fill="none" stroke="#0e6b35" stroke-width="1.5"/><path d="M742.4 37.8 L734.4 45.9" stroke="#0e6b35" stroke-width="1.6" stroke-linecap="round"/>
<path d="M1732.2 35 H1747.8" stroke="#fff" stroke-width="1.1"/>
<rect x="1805.2" y="31.8" width="11.4" height="11.4" rx="2" fill="none" stroke="#fff" stroke-width="1.1"/><path d="M1808.4 28.8 H1816.8 Q1819.5 28.8 1819.5 31.5 V39.8" fill="none" stroke="#fff" stroke-width="1.1"/>
<path d="M1876.5 28.5 L1891.5 43.5 M1891.5 28.5 L1876.5 43.5" stroke="#fff" stroke-width="1.2"/>
<path d="M1805.5 91.5 V102.5 H1819.5 V96.2" fill="none" stroke="#fff" stroke-width="1.3"/><path d="M1808.2 97.2 Q1808.4 90 1817.2 88.6 V85.6 L1822.6 90.6 L1817.2 95.4 V92.4 Q1811.8 92.4 1808.2 97.2 Z" fill="none" stroke="#fff" stroke-width="1.2" stroke-linejoin="round"/>
<path d="M1887.3 92.5 L1891.3 96.3 L1895.3 92.5" fill="none" stroke="#fff" stroke-width="1.4"/>
<path d="M149.7 254 V246.7 H157" fill="none" stroke="#333333" stroke-width="1.3"/><path d="M151.5 248.5 L159.5 256.5 M153.5 256.8 H159.8 V250.5" fill="none" stroke="#333333" stroke-width="1.3"/>
<path d="M500.7 254 V246.7 H508" fill="none" stroke="#333333" stroke-width="1.3"/><path d="M502.5 248.5 L510.5 256.5 M504.5 256.8 H510.8 V250.5" fill="none" stroke="#333333" stroke-width="1.3"/>
<path d="M795.7 254 V246.7 H803" fill="none" stroke="#333333" stroke-width="1.3"/><path d="M797.5 248.5 L805.5 256.5 M799.5 256.8 H805.8 V250.5" fill="none" stroke="#333333" stroke-width="1.3"/>
<path d="M1037.7 254 V246.7 H1045" fill="none" stroke="#333333" stroke-width="1.3"/><path d="M1039.5 248.5 L1047.5 256.5 M1041.5 256.8 H1047.8 V250.5" fill="none" stroke="#333333" stroke-width="1.3"/>
<path d="M1875.5 255.5 L1882.7 248 L1889.9 255.5" fill="none" stroke="#333333" stroke-width="1.4"/>
<path d="M44.9 136.5 H75.2 V146 M64 170.7 H44.9 V136.5" fill="#dedede" stroke="#a3a3a3" stroke-width="1.4"/>
<rect x="48.6" y="140" width="15.5" height="29" fill="#f2f2f2"/>
<path d="M51 134.9 H55.5 A4.6 4.6 0 0 1 64.7 134.9 H69.2 V141 H51 Z" fill="#f2f2f2" stroke="#a3a3a3" stroke-width="1.4"/>
<rect x="64.8" y="148.7" width="19.2" height="25" fill="#f2f2f2" stroke="#a3a3a3" stroke-width="1.4"/>
<path d="M56 213.5 L60.0 217.5 L64 213.5" fill="none" stroke="#a6a6a6" stroke-width="1.2" opacity="1"/>
<path d="M109.2 129 L116.6 146.8 M116.8 129 L109.4 146.8" stroke="#333333" stroke-width="1.1"/>
<circle cx="108.6" cy="149.8" r="2.4" fill="none" stroke="#1e8bcd" stroke-width="1.4"/><circle cx="117.6" cy="149.8" r="2.4" fill="none" stroke="#1e8bcd" stroke-width="1.4"/>
<path d="M108.6 188.2 H101.8 V168.8 H109.6 L111.6 170.6" fill="none" stroke="#333333" stroke-width="1.3"/>
<path d="M110.9 173.2 H118.6 L124.4 179.4 V191.2 H110.9 Z" fill="#f8f8f8" stroke="#333333" stroke-width="1.3"/><path d="M118.3 173.4 V179.6 H124.2" fill="none" stroke="#333333" stroke-width="1.1"/>
<path d="M114.3 183.2 H121 M114.3 186.8 H121" stroke="#666" stroke-width="1"/>
<path d="M137.4 178.4 L141.4 182.4 L145.4 178.4" fill="none" stroke="#333333" stroke-width="1.3" opacity="1"/>
<path d="M110.9 212.6 Q106.5 216.6 101.6 217.4 L111.4 228.6 L119.2 221.5 Z" fill="#fff" stroke="#e07a1f" stroke-width="1.4" stroke-linejoin="round"/>
<path d="M104.6 220.2 L116.6 223.9 L111.5 228.2 Z" fill="#fbd98a"/><path d="M102.8 218.9 L117.3 223.5" stroke="#e07a1f" stroke-width="1.3"/>
<path d="M-2.1 -5 Q-2.1 -6.3 -0.8 -6.3 H0.8 Q2.1 -6.3 2.1 -5 V-1.8 H10 A1.8 1.8 0 0 1 10 1.8 H2.1 V5 Q2.1 6.3 0.8 6.3 H-0.8 Q-2.1 6.3 -2.1 5 Z" transform="translate(115.3 216.6) rotate(-45)" fill="#fff" stroke="#333333" stroke-width="1.4" stroke-linejoin="round"/>
<path d="M347.6 153.2 L352.1 157.6 L356.6 153.2" fill="none" stroke="#333333" stroke-width="1.3" opacity="1"/>
<path d="M415.4 153.2 L419.9 157.6 L424.4 153.2" fill="none" stroke="#333333" stroke-width="1.3" opacity="1"/>
<path d="M438.9 160.3 L446.7 141.5 L454.5 160.3 M441.7 153.4 H451.7" fill="none" stroke="#333333" stroke-width="1.4"/>
<path d="M453.8 146.4 L457.3 142.9 L460.8 146.4" fill="none" stroke="#1e8bcd" stroke-width="1.5"/>
<path d="M480.6 160.3 L486.5 145.8 L492.4 160.3 M482.7 155 H490.3" fill="none" stroke="#333333" stroke-width="1.4"/>
<path d="M492.9 143.3 L496.4 146.8 L499.9 143.3" fill="none" stroke="#1e8bcd" stroke-width="1.5"/>
<path d="M269.5 192 V201.5 A4.7 4.7 0 0 0 278.9 201.5 V192" fill="none" stroke="#333333" stroke-width="1.3"/><path d="M267.2 209.3 H281.2" stroke="#333333" stroke-width="1.3"/>
<path d="M299 199.6 L303.15 203.79999999999998 L307.3 199.6" fill="none" stroke="#333333" stroke-width="1.3" opacity="1"/>
<rect x="328.20" y="189.20" width="1.4" height="1.4" fill="#222"/><rect x="331.27" y="189.20" width="1.4" height="1.4" fill="#222"/><rect x="334.34" y="189.20" width="1.4" height="1.4" fill="#222"/><rect x="337.41" y="189.20" width="1.4" height="1.4" fill="#222"/><rect x="340.48" y="189.20" width="1.4" height="1.4" fill="#222"/><rect x="343.55" y="189.20" width="1.4" height="1.4" fill="#222"/><rect x="346.62" y="189.20" width="1.4" height="1.4" fill="#222"/><rect x="349.69" y="189.20" width="1.4" height="1.4" fill="#222"/><rect x="328.20" y="192.20" width="1.4" height="1.4" fill="#222"/><rect x="349.50" y="192.20" width="1.4" height="1.4" fill="#222"/><rect x="338.80" y="192.20" width="1.4" height="1.4" fill="#222"/><rect x="328.20" y="195.20" width="1.4" height="1.4" fill="#222"/><rect x="349.50" y="195.20" width="1.4" height="1.4" fill="#222"/><rect x="338.80" y="195.20" width="1.4" height="1.4" fill="#222"/><rect x="328.20" y="198.20" width="1.4" height="1.4" fill="#222"/><rect x="349.50" y="198.20" width="1.4" height="1.4" fill="#222"/><rect x="338.80" y="198.20" width="1.4" height="1.4" fill="#222"/><rect x="328.20" y="201.20" width="1.4" height="1.4" fill="#222"/><rect x="349.50" y="201.20" width="1.4" height="1.4" fill="#222"/><rect x="338.80" y="201.20" width="1.4" height="1.4" fill="#222"/><rect x="328.20" y="204.20" width="1.4" height="1.4" fill="#222"/><rect x="349.50" y="204.20" width="1.4" height="1.4" fill="#222"/><rect x="338.80" y="204.20" width="1.4" height="1.4" fill="#222"/><rect x="328.20" y="207.20" width="1.4" height="1.4" fill="#222"/><rect x="349.50" y="207.20" width="1.4" height="1.4" fill="#222"/><rect x="338.80" y="207.20" width="1.4" height="1.4" fill="#222"/><rect x="331.27" y="199.40" width="1.4" height="1.4" fill="#222"/><rect x="334.34" y="199.40" width="1.4" height="1.4" fill="#222"/><rect x="337.41" y="199.40" width="1.4" height="1.4" fill="#222"/><rect x="340.48" y="199.40" width="1.4" height="1.4" fill="#222"/><rect x="343.55" y="199.40" width="1.4" height="1.4" fill="#222"/><rect x="346.62" y="199.40" width="1.4" height="1.4" fill="#222"/>
<path d="M328.2 210.7 H351" stroke="#000" stroke-width="2"/>
<path d="M364.3 199.6 L368.40000000000003 203.6 L372.5 199.6" fill="none" stroke="#333333" stroke-width="1.3" opacity="1"/>
<path d="M403.9 192.6 L396.5 199.4 L403.4 205.5 L411.1 197.9" fill="#fafafa" stroke="#333333" stroke-width="1.5" stroke-linejoin="round"/>
<path d="M403.9 192.8 V190.9 A1.75 1.75 0 0 1 407.4 190.9 V197.6" fill="none" stroke="#333333" stroke-width="1.4"/>
<path d="M409.8 195.6 Q413.6 194.6 414.9 198.6 Q415.3 201.6 413.4 204.4 Q412.8 200.6 411 198.4 Z" fill="#0f6cbd"/>
<rect x="393" y="207" width="24" height="5.6" fill="#b4c7e7"/>
<path d="M429.1 199.6 L433.15000000000003 203.6 L437.20000000000005 199.6" fill="none" stroke="#333333" stroke-width="1.3" opacity="1"/>
<path d="M460 205.2 L466.4 189.4 L472.8 205.2 M462.2 199.9 H470.6" fill="none" stroke="#333333" stroke-width="1.4"/>
<rect x="454.2" y="207.2" width="23.7" height="5.4" fill="#000"/>
<path d="M490.2 199.2 L494.2 203.39999999999998 L498.2 199.2" fill="none" stroke="#333333" stroke-width="1.3" opacity="1"/>
<path d="M537.3 141.2 H558.5999999999999" stroke="#333333" stroke-width="1.5"/><path d="M541.3 147.4 H554.8" stroke="#333333" stroke-width="1.5"/><path d="M537.3 153.7 H558.5999999999999" stroke="#333333" stroke-width="1.5"/>
<path d="M576.3 145.6 H597.5999999999999" stroke="#333333" stroke-width="1.5"/><path d="M579.3 151.9 H594.3" stroke="#333333" stroke-width="1.5"/><path d="M576.3 158.3 H597.5999999999999" stroke="#333333" stroke-width="1.5"/>
<path d="M615.6 151.4 H636.8000000000001" stroke="#333333" stroke-width="1.5"/><path d="M618.6 157.8 H633.6" stroke="#333333" stroke-width="1.5"/><path d="M615.6 164.1 H636.8000000000001" stroke="#333333" stroke-width="1.5"/>
<text x="0" y="0" transform="translate(656.8,160.8) rotate(-45)" font-family="Liberation Sans" font-size="17.5" fill="#333333">ab</text>
<path d="M661.4 163 L676.4 147.4 M670.6 147.3 H676.6 V153.4" fill="none" stroke="#1e8bcd" stroke-width="1.5"/>
<path d="M686.3 151.2 L690.3 155.39999999999998 L694.3 151.2" fill="none" stroke="#333333" stroke-width="1.3" opacity="1"/>
<path d="M769.8 153.4 Q772.6 158.6 766.6 159.5 H760.2 M763.3 156.4 L760 159.5 L763.3 162.6" fill="none" stroke="#1e8bcd" stroke-width="1.5"/>
<path d="M537.3 191.3 H558.5999999999999" stroke="#333333" stroke-width="1.5"/><path d="M537.3 197.2 H552.3" stroke="#333333" stroke-width="1.5"/><path d="M537.3 203.1 H558.5999999999999" stroke="#333333" stroke-width="1.5"/><path d="M537.3 209.1 H552.3" stroke="#333333" stroke-width="1.5"/>
<path d="M576.3 191.3 H597.5999999999999" stroke="#333333" stroke-width="1.5"/><path d="M579.3 197.2 H594.5999999999999" stroke="#333333" stroke-width="1.5"/><path d="M576.3 203.1 H597.5999999999999" stroke="#333333" stroke-width="1.5"/><path d="M579.3 209.1 H594.5999999999999" stroke="#333333" stroke-width="1.5"/>
<path d="M615.3 191.3 H636.5999999999999" stroke="#333333" stroke-width="1.5"/><path d="M621.5999999999999 197.2 H636.5999999999999" stroke="#333333" stroke-width="1.5"/><path d="M615.3 203.1 H636.5999999999999" stroke="#333333" stroke-width="1.5"/><path d="M621.5999999999999 209.1 H636.5999999999999" stroke="#333333" stroke-width="1.5"/>
<path d="M654.2 191.1 H675.8000000000001" stroke="#333333" stroke-width="1.5"/><path d="M666.5 197.2 H675.8000000000001" stroke="#333333" stroke-width="1.5"/><path d="M666.5 202.9 H675.8000000000001" stroke="#333333" stroke-width="1.5"/><path d="M654.2 209.1 H675.8000000000001" stroke="#333333" stroke-width="1.5"/>
<path d="M693.2 191.1 H714.9000000000001" stroke="#333333" stroke-width="1.5"/><path d="M705.5 197.2 H714.9000000000001" stroke="#333333" stroke-width="1.5"/><path d="M705.5 202.9 H714.9000000000001" stroke="#333333" stroke-width="1.5"/><path d="M693.2 209.1 H714.9000000000001" stroke="#333333" stroke-width="1.5"/>
<path d="M655 200 H663.6 M658.3 196.6 L654.9 200 L658.3 203.4" fill="none" stroke="#1e8bcd" stroke-width="1.5"/>
<path d="M693.4 200 H701.9 M698.6 196.6 L702 200 L698.6 203.4" fill="none" stroke="#1e8bcd" stroke-width="1.5"/>
<rect x="748.1" y="190" width="20.6" height="20.6" fill="#fafafa" stroke="#333333" stroke-width="1.4"/><path d="M758.4 190 V210.6" stroke="#333333" stroke-width="1.4"/>
<rect x="748.1" y="194.3" width="20.6" height="11.5" fill="#fafafa" stroke="#1e8bcd" stroke-width="1.5"/>
<path d="M750.6 200.1 H766.2 M753.6 197.1 L750.6 200.1 L753.6 203.1 M763.2 197.1 L766.2 200.1 L763.2 203.1" fill="none" stroke="#1e8bcd" stroke-width="1.5"/>
<path d="M783.3 200 L787.5999999999999 204.2 L791.9 200" fill="none" stroke="#333333" stroke-width="1.3" opacity="1"/>
<path d="M1028.5 153.2 L1033.0 157.6 L1037.5 153.2" fill="none" stroke="#333333" stroke-width="1.3" opacity="1"/>
<path d="M867 199.6 L871.3 203.79999999999998 L875.6 199.6" fill="none" stroke="#333333" stroke-width="1.3" opacity="1"/>
<circle cx="943.3" cy="196.8" r="3.6" fill="#333333"/><path d="M946.6 197.5 Q947.5 207 938.8 211 L938.3 209.8 Q943.6 206.6 943.6 200.4 Z" fill="#333333"/>
<path d="M974.6 195.4 H987.5 M978.4 191.6 L974.5 195.4 L978.4 199.2" fill="none" stroke="#1e8bcd" stroke-width="1.4"/>
<path d="M1013 206.4 H1025.8 M1022 202.6 L1025.9 206.4 L1022 210.2" fill="none" stroke="#1e8bcd" stroke-width="1.4"/>
<rect x="1102.9" y="135" width="40.5" height="31.5" fill="#fafafa" stroke="#333333" stroke-width="1.3"/>
<path d="M1109.9 135 V166.5 M1128.7 135 V166.5 M1135.7 135 V166.5 M1102.9 145.9 H1143.4 M1102.9 156.4 H1143.4" stroke="#333333" stroke-width="1.2"/>
<rect x="1110.3" y="135.1" width="18.2" height="10.6" fill="#ff9aa2" stroke="#d13438" stroke-width="1.3"/>
<rect x="1110.3" y="146.3" width="12.1" height="9.7" fill="#83bceb" stroke="#0f6cbd" stroke-width="1.3"/>
<rect x="1110.3" y="156.8" width="21.3" height="9.6" fill="#ff9aa2" stroke="#d13438" stroke-width="1.3"/>
<path d="M1164.7 211.2 L1168.45 216.0 L1172.2 211.2" fill="none" stroke="#333333" stroke-width="1.3" opacity="1"/>
<rect x="1204.9" y="135.3" width="40.2" height="31.4" fill="#fafafa" stroke="#333333" stroke-width="1.3"/>
<rect x="1217.8" y="145.9" width="27.3" height="20.8" fill="#83bceb" stroke="#0f6cbd" stroke-width="1.3"/>
<path d="M1217.7 135.3 V145.9 M1231.7 135.3 V145.9 M1204.9 145.9 H1217.7 M1204.9 156 H1217.7" stroke="#333333" stroke-width="1.2"/><path d="M1231.7 145.9 V166.7 M1217.8 156 H1245.1" stroke="#0f6cbd" stroke-width="1.2"/>
<g transform="translate(0,0)"><ellipse cx="1240.6" cy="154.6" rx="13.6" ry="2.5" transform="rotate(-47.3 1240.6 154.6)" fill="#fafafa" stroke="#fff" stroke-width="3.4"/><ellipse cx="1240.6" cy="154.6" rx="13.6" ry="2.5" transform="rotate(-47.3 1240.6 154.6)" fill="#fafafa" stroke="#333333" stroke-width="1.3"/><path d="M1229.4 162.6 Q1234.2 163 1234.2 167.8 Q1233.4 173.2 1225.8 173.6 Q1219.4 173.8 1215.2 170.4 Q1220.8 170.4 1222.6 166.4 Q1224.4 162.2 1229.4 162.6 Z" fill="#83bceb" stroke="#fff" stroke-width="3"/><path d="M1229.4 162.6 Q1234.2 163 1234.2 167.8 Q1233.4 173.2 1225.8 173.6 Q1219.4 173.8 1215.2 170.4 Q1220.8 170.4 1222.6 166.4 Q1224.4 162.2 1229.4 162.6 Z" fill="#83bceb" stroke="#0f6cbd" stroke-width="1.4"/></g>
<path d="M1242.4 211.2 L1246.2 216.0 L1250.0 211.2" fill="none" stroke="#333333" stroke-width="1.3" opacity="1"/>
<rect x="1284.9" y="135.3" width="40" height="31.4" fill="#fafafa" stroke="#333333" stroke-width="1.3"/>
<path d="M1292 135.3 V166.7 M1317.7 135.3 V166.7 M1284.9 142.4 H1324.9 M1284.9 159 H1324.9" stroke="#333333" stroke-width="1.2"/>
<rect x="1292.3" y="142.7" width="25.2" height="16" fill="#83bceb" stroke="#0f6cbd" stroke-width="1.3"/>
<g transform="translate(80,0)"><ellipse cx="1240.6" cy="154.6" rx="13.6" ry="2.5" transform="rotate(-47.3 1240.6 154.6)" fill="#fafafa" stroke="#fff" stroke-width="3.4"/><ellipse cx="1240.6" cy="154.6" rx="13.6" ry="2.5" transform="rotate(-47.3 1240.6 154.6)" fill="#fafafa" stroke="#333333" stroke-width="1.3"/><path d="M1229.4 162.6 Q1234.2 163 1234.2 167.8 Q1233.4 173.2 1225.8 173.6 Q1219.4 173.8 1215.2 170.4 Q1220.8 170.4 1222.6 166.4 Q1224.4 162.2 1229.4 162.6 Z" fill="#83bceb" stroke="#fff" stroke-width="3"/><path d="M1229.4 162.6 Q1234.2 163 1234.2 167.8 Q1233.4 173.2 1225.8 173.6 Q1219.4 173.8 1215.2 170.4 Q1220.8 170.4 1222.6 166.4 Q1224.4 162.2 1229.4 162.6 Z" fill="#83bceb" stroke="#0f6cbd" stroke-width="1.4"/></g>
<path d="M1325 211.2 L1329.0 216.0 L1333 211.2" fill="none" stroke="#333333" stroke-width="1.3" opacity="1"/>
<rect x="1370.9" y="131.3" width="22.4" height="19.2" fill="#fafafa" stroke="#333333" stroke-width="1.3"/><path d="M1379 131.3 V150.5 M1386 131.3 V150.5 M1370.9 137 H1393.3 M1370.9 144.7 H1393.3" stroke="#333333" stroke-width="1.1"/>
<rect x="1379.3" y="137" width="14" height="7.7" fill="#83bceb" stroke="#0f6cbd" stroke-width="1.3"/>
<path d="M1371.5 140.8 H1382 M1375.3 137 L1371.5 140.8 L1375.3 144.6" fill="none" stroke="#fff" stroke-width="3.2"/><path d="M1371.5 140.8 H1382 M1375.3 137 L1371.5 140.8 L1375.3 144.6" fill="none" stroke="#1e8bcd" stroke-width="1.5"/>
<path d="M1463.2 140.2 L1467.2 144.39999999999998 L1471.2 140.2" fill="none" stroke="#333333" stroke-width="1.3" opacity="1"/>
<rect x="1370.9" y="170" width="22.4" height="19.6" fill="#fafafa" stroke="#333333" stroke-width="1.3"/><path d="M1379 170 V189.6 M1386 170 V189.6 M1370.9 175.6 H1393.3 M1370.9 183.8 H1393.3" stroke="#333333" stroke-width="1.1"/>
<rect x="1383" y="174" width="12" height="12" fill="#fafafa"/><rect x="1375.2" y="175.8" width="7.6" height="7.8" fill="#83bceb" stroke="#0f6cbd" stroke-width="1.4"/>
<path d="M1386 175.8 L1393.2 183.2 M1393.2 175.8 L1386 183.2" stroke="#e8393f" stroke-width="1.5"/>
<path d="M1469.2 179.2 L1473.2 183.39999999999998 L1477.2 179.2" fill="none" stroke="#333333" stroke-width="1.3" opacity="1"/>
<path d="M1370.9 210.5 V230.3 H1393.3 V210.5" fill="#fafafa" stroke="#333333" stroke-width="1.3"/><path d="M1376.3 211.5 V230 M1387.7 211.5 V230 M1370.9 216 H1393.3 M1370.9 224.5 H1393.3" stroke="#333333" stroke-width="1.1"/>
<rect x="1376.6" y="216.4" width="10.8" height="7.9" fill="#83bceb" stroke="#0f6cbd" stroke-width="1.4"/>
<path d="M1375.2 208.8 H1389.4 M1375.2 206.5 V211 M1389.4 206.5 V211" stroke="#1e8bcd" stroke-width="1.3"/>
<path d="M1463.2 218.5 L1467.2 222.7 L1471.2 218.5" fill="none" stroke="#333333" stroke-width="1.3" opacity="1"/>
<path d="M1538.3 131.8 V131 H1520.2 L1529.3 141.2 L1520.2 151 H1538.3" fill="none" stroke="#333333" stroke-width="1.5"/>
<path d="M1553 140 L1557.0 144 L1561 140" fill="none" stroke="#333333" stroke-width="1.3" opacity="1"/>
<rect x="1517.7" y="170" width="22.8" height="19.8" fill="#fafafa" stroke="#333333" stroke-width="1.3"/><path d="M1517.7 171 H1540.5" stroke="#333333" stroke-width="2"/>
<path d="M1529 175.5 V186.5 M1525.4 183 L1529 186.6 L1532.6 183" fill="none" stroke="#1e8bcd" stroke-width="1.5"/>
<path d="M1550 177.5 L1554.0 181.5 L1558 177.5" fill="none" stroke="#333333" stroke-width="1.3" opacity="1"/>
<path d="M1517.8 220.6 L1530.4 208 L1539.6 217.4 L1527.4 229.6 Z" fill="#fafafa" stroke="#a43fbe" stroke-width="1.4" stroke-linejoin="round"/><path d="M1517.8 220.6 L1523.5 215 L1533 224.2 L1527.4 229.6 Z" fill="#d7a3e3" stroke="#a43fbe" stroke-width="1.4" stroke-linejoin="round"/>
<path d="M1550 218.4 L1554.0 222.4 L1558 218.4" fill="none" stroke="#333333" stroke-width="1.3" opacity="1"/>
<path d="M1602.6 141 H1626 L1617 151.8 V163.5 H1610.6 V151.8 Z" fill="#fafafa" stroke="#333333" stroke-width="1.4" stroke-linejoin="round"/>
<path d="M1621 211.5 L1625.0 216.1 L1629 211.5" fill="none" stroke="#333333" stroke-width="1.3" opacity="1"/>
<circle cx="1679.4" cy="145.4" r="14.6" fill="none" stroke="#333333" stroke-width="1.4"/><path d="M1668.8 155.6 L1651.8 173" stroke="#333333" stroke-width="1.4"/>
<path d="M1694 211.5 L1698.0 216.1 L1702 211.5" fill="none" stroke="#333333" stroke-width="1.3" opacity="1"/>
<rect x="1747.9" y="130.9" width="40.5" height="40" fill="none" stroke="#d35230" stroke-width="1.8"/>
<rect x="1752" y="135" width="13.6" height="14.6" fill="none" stroke="#d35230" stroke-width="1.6"/><rect x="1770.4" y="135" width="13.6" height="14.6" fill="none" stroke="#d35230" stroke-width="1.6"/><rect x="1752" y="153.8" width="13.6" height="13.2" fill="none" stroke="#d35230" stroke-width="1.6"/><rect x="1770.4" y="153.8" width="13.6" height="13.2" fill="none" stroke="#d35230" stroke-width="1.6"/>
<path d="M141 294.6 L148.0 301.6 L155 294.6" fill="none" stroke="#333333" stroke-width="1.3" opacity="1"/>
<rect x="177.4" y="288.7" width="3" height="3" fill="#333"/><rect x="177.4" y="294.9" width="3" height="3" fill="#333"/><rect x="177.4" y="301.1" width="3" height="3" fill="#333"/>
<path d="M204.5 288 L221.6 304.8 M221.6 288 L204.5 304.8" stroke="#b3b3b3" stroke-width="1.1"/>
<path d="M237.3 295.5 L245.2 303.4 L260.8 288" fill="none" stroke="#b3b3b3" stroke-width="1.1"/>
<path d="M1886 291 L1893.5 299 L1901 291" fill="none" stroke="#333333" stroke-width="1.3" opacity="1"/>
<path d="M1899 341.5 L1905 332.5 L1911 341.5 Z" fill="#717171" stroke="#717171" stroke-width="1.5" stroke-linejoin="round"/>
<path d="M1899 927 L1905 935.5 L1911 927 Z" fill="#717171" stroke="#717171" stroke-width="1.5" stroke-linejoin="round"/>
<rect x="1148.5" y="949.5" width="3" height="3" fill="#333"/><rect x="1148.5" y="955.5" width="3" height="3" fill="#333"/><rect x="1148.5" y="961.5" width="3" height="3" fill="#333"/>
<path d="M1184.5 950.5 L1175.8 957 L1184.5 963.5 Z" fill="#717171" stroke="#717171" stroke-width="1.5" stroke-linejoin="round"/>
<path d="M1874.8 950.5 L1883.5 957 L1874.8 963.5 Z" fill="#717171" stroke="#717171" stroke-width="1.5" stroke-linejoin="round"/>
<path d="M35.6 951.8 L29.8 957.4 L35.6 963 Z" fill="#c4c4c4"/><path d="M64.2 951.8 L70 957.4 L64.2 963 Z" fill="#c4c4c4"/>
<circle cx="332" cy="957.8" r="10.4" fill="none" stroke="#6b6b6b" stroke-width="1.2"/><path d="M326.4 957.8 H337.6 M332 952.2 V963.4" stroke="#6b6b6b" stroke-width="1.5"/>
<circle cx="96.45" cy="984.9" r="2.5" fill="none" stroke="#262626" stroke-width="1.3"/>
<path d="M93.5 987 Q90.5 985.4 88.9 985.9 Q87.3 986.8 88.6 988.3 L92.6 989.9 V995 Q91.7 997.8 91 1000 Q91.1 1001.7 92.7 1001.6 Q93.7 1001.4 94.3 1000.9 M93.5 987 Q96.4 988.8 99.4 987 Q102.6 985.1 104.1 985.6 Q105.7 986.4 104.8 987.9 L100.4 989.8 V993.7" fill="none" stroke="#262626" stroke-width="1.3" stroke-linecap="round" stroke-linejoin="round"/>
<path d="M97.2 997.1 L101.5 1001.4 L109.1 994.2" fill="none" stroke="#262626" stroke-width="1.4"/>
<rect x="1494.9" y="981.9" width="18.6" height="18.6" fill="none" stroke="#333" stroke-width="1.4"/><path d="M1501.1 981.9 V1000.5 M1507.3 981.9 V1000.5 M1494.9 988.1 H1513.5 M1494.9 994.3 H1513.5" stroke="#333" stroke-width="1.4"/>
<rect x="1555" y="982" width="19.8" height="18.5" fill="none" stroke="#333" stroke-width="1.4"/><rect x="1558.4" y="985.2" width="13" height="12.1" fill="none" stroke="#333" stroke-width="1.2"/><path d="M1561 988.6 H1569 M1561 991.2 H1569 M1561 993.8 H1569" stroke="#333" stroke-width="1.1"/>
<rect x="1615" y="982" width="20" height="18.5" fill="none" stroke="#333" stroke-width="1.4"/><path d="M1615 992.6 H1626.6 V982 M1620.6 982 V992.6" fill="none" stroke="#333" stroke-width="1.4"/>
<path d="M1663 991.5 H1674" stroke="#555" stroke-width="1.2"/><path d="M1683 991.8 H1831" stroke="#666" stroke-width="1.3"/><rect x="1756" y="983.2" width="7.8" height="16.8" fill="#666" rx="1"/><path d="M1838.6 991.5 H1850.4 M1844.5 985.6 V997.4" stroke="#555" stroke-width="1.2"/>
<rect x="225.5" y="19.5" width="355" height="43" fill="none" stroke="#ff0000" stroke-width="5" rx="1"/>
<rect x="1495.5" y="402.5" width="110" height="539" fill="none" stroke="#ff0000" stroke-width="5" rx="1"/>
<line x1="1131" y1="177.5" x2="558.0" y2="44.4" stroke="#ff0000" stroke-width="5.5" stroke-linecap="round"/>
<path d="M539 40 L564.6 38.2 L559.0 44.6 L561.2 52.8 Z" fill="#ff0000"/>
<line x1="1821.6" y1="212.6" x2="1587.5" y2="513.6" stroke="#ff0000" stroke-width="5.5" stroke-linecap="round"/>
<path d="M1575.5 529 L1584.6 505.1 L1588.1 512.8 L1596.5 514.3 Z" fill="#ff0000"/>
</svg>
</body></html>
